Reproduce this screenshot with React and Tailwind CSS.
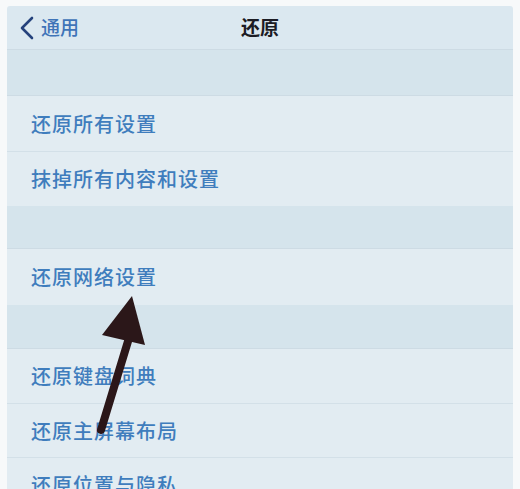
export default function App() {
  const font = { fontFamily: '"Noto Sans CJK SC", "Noto Sans", sans-serif' };

  const Row = ({ label, h = "h-[55px]", border = true }) => (
    <div
      className={`${h} flex items-center pl-[24px] bg-[#e2ecf2] ${
        border ? "border-b border-[#d3e0e8]" : ""
      }`}
    >
      <span className="text-[20px] font-medium text-[#3f7dbd] tracking-[1px]">
        {label}
      </span>
    </div>
  );

  const Gap = ({ h }) => (
    <div className={`${h} bg-[#d5e4ec] border-b border-[#cddbe4]`} />
  );

  return (
    <div
      className="relative w-[520px] h-[489px] overflow-hidden bg-[#f7f9fa] pt-[6px] px-[7px]"
      style={font}
    >
      <div className="flex flex-col">
        {/* nav bar */}
        <div className="relative h-[44px] bg-[#dbe8f0] border-b border-[#cddbe4] flex items-center rounded-t-[3px]">
          <div className="flex items-center pl-[12px] gap-[6px]">
            <svg width="16" height="24" viewBox="0 0 16 24">
              <path
                d="M13 2 L3 12 L13 22"
                fill="none"
                stroke="#25427c"
                strokeWidth="2.6"
                strokeLinecap="round"
                strokeLinejoin="round"
              />
            </svg>
            <span className="text-[19px] font-medium text-[#3f74b8]">通用</span>
          </div>
          <span className="absolute left-1/2 -translate-x-1/2 text-[19px] font-bold text-[#1c1c24]">
            还原
          </span>
        </div>

        <Gap h="h-[46px]" />
        <Row label="还原所有设置" h="h-[56px]" />
        <Row label="抹掉所有内容和设置" h="h-[54px]" border={false} />
        <Gap h="h-[43px]" />
        <Row label="还原网络设置" h="h-[56px]" border={false} />
        <Gap h="h-[44px]" />
        <Row label="还原键盘词典" h="h-[55px]" />
        <Row label="还原主屏幕布局" h="h-[54px]" />
        <Row label="还原位置与隐私" h="h-[54px]" />
      </div>

      {/* annotation arrow */}
      <svg
        className="absolute left-0 top-0 pointer-events-none"
        width="520"
        height="489"
        viewBox="0 0 520 489"
      >
        <path
          d="M101 430 L129 338"
          stroke="#2b1719"
          strokeWidth="8"
          strokeLinecap="round"
        />
        <polygon points="132,296 102,335 145,345" fill="#2b1719" />
      </svg>
    </div>
  );
}
